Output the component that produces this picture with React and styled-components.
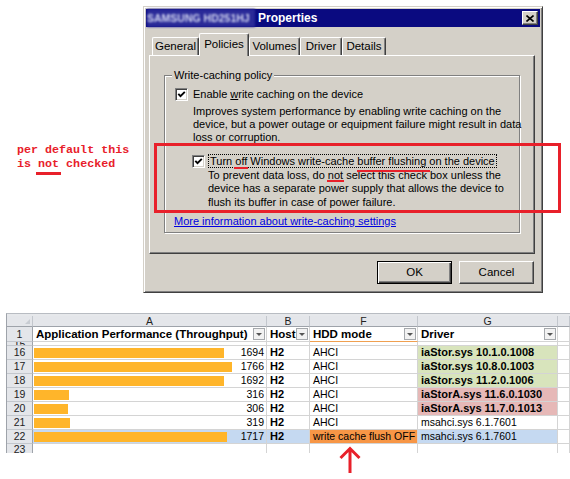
import React from "react";
import styled, { createGlobalStyle } from "styled-components";

const GlobalStyle = createGlobalStyle`
  html, body { margin: 0; padding: 0; background: #fff; }
  body {
    width: 570px;
    height: 479px;
    overflow: hidden;
    font-family: "Liberation Sans", Arial, sans-serif;
  }
`;

const RED = "#e8202a";

const Page = styled.div`
  position: relative;
  width: 570px;
  height: 479px;
`;

const Top = styled.div`
  display: flex;
  padding-top: 6px;
`;

const Note = styled.div`
  width: 143px;
  box-sizing: border-box;
  padding: 137px 0 0 17px;
  font: bold 11.7px/14px "Liberation Mono", "DejaVu Sans Mono", monospace;
  color: ${RED};
  white-space: pre;
`;

const Mark = styled.span`
  position: relative;
  &::after {
    content: "";
    position: absolute;
    left: ${(p) => p.$l || 0}px;
    right: ${(p) => p.$r || 0}px;
    bottom: ${(p) => p.$b}px;
    height: ${(p) => p.$h || 2}px;
    background: ${RED};
  }
`;

const Dialog = styled.div`
  width: 400px;
  height: 287px;
  box-sizing: border-box;
  background: #d4d0c8;
  border: 1px solid;
  border-color: #d4d0c8 #404040 #404040 #d4d0c8;
  box-shadow: inset 1px 1px #fff, inset -1px -1px #808080;
  padding: 2px;
  display: flex;
  flex-direction: column;
  font: 11px/13px "Liberation Sans", Arial, sans-serif;
  color: #000;
`;

const TitleBar = styled.div`
  height: 18px;
  background: #0a0a80;
  display: flex;
  align-items: center;
  padding: 0 2px 0 1px;
`;

const Blurred = styled.span`
  width: 108px;
  font: bold 10.5px/18px "Liberation Sans", Arial, sans-serif;
  color: #d8dcf4;
  background: #2a2a98;
  filter: blur(0.9px);
  white-space: nowrap;
  overflow: hidden;
`;

const TitleText = styled.span`
  flex: 1;
  margin-left: 3px;
  font: bold 12px/18px "Liberation Sans", Arial, sans-serif;
  color: #fff;
`;

const CloseBtn = styled.span`
  width: 16px;
  height: 14px;
  box-sizing: border-box;
  background: #d4d0c8;
  border: 1px solid;
  border-color: #fff #404040 #404040 #fff;
  box-shadow: inset -1px -1px #808080;
  display: flex;
  align-items: center;
  justify-content: center;
`;

const Body = styled.div`
  padding: 6px 5px 0 3px;
  display: flex;
  flex-direction: column;
`;

const TabStrip = styled.div`
  display: flex;
  align-items: flex-end;
  height: 22px;
  padding-left: 3px;
  position: relative;
  z-index: 1;
`;

const Tab = styled.div`
  width: ${(p) => p.$w}px;
  height: ${(p) => (p.$active ? 23 : 18)}px;
  margin-bottom: ${(p) => (p.$active ? -1 : 0)}px;
  box-sizing: border-box;
  background: #d4d0c8;
  border: 1px solid;
  border-bottom: none;
  border-color: #fff #404040 #404040 #fff;
  border-radius: 2px 2px 0 0;
  box-shadow: inset -1px 0 #808080;
  text-align: center;
  line-height: ${(p) => (p.$active ? 20 : 17)}px;
  font-size: 11.5px;
`;

const Panel = styled.div`
  height: 199px;
  box-sizing: border-box;
  border: 1px solid;
  border-color: #fff #404040 #404040 #fff;
  box-shadow: inset -1px -1px #808080;
  padding: 19px 14px 0;
`;

const Group = styled.div`
  position: relative;
  height: 158px;
  box-sizing: border-box;
  border: 1px solid #808080;
  box-shadow: 1px 1px 0 #fff, inset 1px 1px 0 #fff;
  padding: 12px 8px 0 10px;
`;

const Legend = styled.span`
  position: absolute;
  top: -7px;
  left: 7px;
  padding: 0 2px;
  background: #d4d0c8;
  line-height: 13px;
`;

const CheckRow = styled.div`
  display: flex;
  align-items: center;
  gap: ${(p) => p.$gap}px;
  margin-left: ${(p) => p.$indent || 0}px;
  margin-top: ${(p) => p.$top || 0}px;
`;

const Box = styled.span`
  width: 13px;
  height: 13px;
  flex: none;
  box-sizing: border-box;
  background: #fff;
  border: 1px solid;
  border-color: #808080 #fff #fff #808080;
  box-shadow: inset 1px 1px #404040, inset -1px -1px #d4d0c8;
  display: flex;
  align-items: center;
  justify-content: center;
`;

const FocusLabel = styled.span`
  border: 1px dotted #000;
  padding: 0 1px;
  line-height: 12px;
`;

const Desc = styled.div`
  margin-left: ${(p) => p.$indent}px;
  margin-top: ${(p) => p.$top}px;
  line-height: ${(p) => p.$lh}px;
  white-space: nowrap;
`;

const Link = styled.a`
  display: block;
  margin: 5.5px 0 0 -1px;
  color: #0000e0;
  text-decoration: underline;
  line-height: 13px;
`;

const ButtonRow = styled.div`
  display: flex;
  justify-content: flex-end;
  gap: 7px;
  margin: 7px 1px 0 0;
`;

const Button = styled.div`
  width: 75px;
  height: 23px;
  box-sizing: border-box;
  background: #d4d0c8;
  border: 1px solid;
  border-color: ${(p) => (p.$default ? "#000" : "#fff #404040 #404040 #fff")};
  box-shadow: ${(p) =>
    p.$default
      ? "inset 1px 1px #fff, inset -1px -1px #404040, inset -2px -2px #808080"
      : "inset -1px -1px #808080"};
  display: flex;
  align-items: center;
  justify-content: center;
  font-size: 11.5px;
`;

const RedBox = styled.div`
  position: absolute;
  left: 154px;
  top: 143px;
  width: 407px;
  height: 70px;
  box-sizing: border-box;
  border: 3px solid ${RED};
  pointer-events: none;
`;

/* ---------- spreadsheet ---------- */

const Sheet = styled.div`
  margin: 20px 0 0 6px;
  width: 564px;
  border-left: 1px solid #9ea3aa;
  border-top: 1px solid #b8bcc2;
  padding-top: 2px;
  background: #e6e8eb;
  font: 10.5px "Liberation Sans", Arial, sans-serif;
  color: #000;
`;

const Grid = styled.div`
  display: grid;
  grid-template-columns: 26px 234px 43px 108px 140px 12px;
  grid-template-rows: 11px 15px 4px repeat(7, 14px) 9px;
  background: #fff;
`;

const Cell = styled.div`
  box-sizing: border-box;
  border-right: 1px solid #d4d4d4;
  border-bottom: ${(p) => (p.$last ? "none" : "1px solid #d4d4d4")};
  background: ${(p) => p.$bg || "#fff"};
  font-weight: ${(p) => (p.$bold ? "bold" : "normal")};
  font-size: ${(p) => (p.$bold ? 11 : 10.5)}px;
  line-height: 13px;
  padding-left: 3px;
  white-space: nowrap;
  overflow: hidden;
  display: flex;
  align-items: center;
`;

const HeadCell = styled(Cell)`
  background: #e4e6ea;
  border-color: #c3c7cd;
  border-bottom: 1px solid #9ea3aa;
  justify-content: center;
  padding: 0;
  line-height: 10px;
  color: #222;
  font-size: 10.5px;
  position: relative;
`;

const Corner = styled(HeadCell)`
  &::after {
    content: "";
    position: absolute;
    right: 2px;
    bottom: 2px;
    border-style: solid;
    border-width: 0 0 5px 5px;
    border-color: transparent transparent #c8ccd2 transparent;
  }
`;

const RowNum = styled(Cell)`
  background: #e4e6ea;
  border-right: 1px solid #9ea3aa;
  border-bottom: ${(p) => (p.$last ? "none" : "1px solid #c3c7cd")};
  justify-content: center;
  align-items: ${(p) => (p.$clip ? "flex-start" : "center")};
  padding: 0;
  color: #222;
  font-size: 10.5px;
  line-height: ${(p) => (p.$clip ? "11px" : "13px")};
`;

const TitleCell = styled(Cell)`
  justify-content: space-between;
  padding-left: 3px;
  font-size: 11.5px;
  border-bottom: 1px solid ${(p) => p.$line || "#d4d4d4"};
`;

const Filter = styled.span`
  width: 12px;
  height: 12px;
  flex: none;
  margin-right: 1px;
  box-sizing: border-box;
  border: 1px solid #a6a9ad;
  background: #f2f2f2;
  display: flex;
  align-items: center;
  justify-content: center;
  &::after {
    content: "";
    border-style: solid;
    border-width: 3px 3px 0 3px;
    border-color: #555 transparent transparent transparent;
  }
`;

const BarCell = styled(Cell)`
  padding: 0 2px 0 1px;
`;

const Bar = styled.span`
  height: 10px;
  background: #ffb52a;
  flex: none;
`;

const Value = styled.span`
  margin-left: auto;
`;

const Arrow = styled.svg`
  position: absolute;
  left: 338px;
  top: 446px;
`;

const tabs = [
  { label: "General", w: 47 },
  { label: "Policies", w: 50, active: true },
  { label: "Volumes", w: 51 },
  { label: "Driver", w: 42 },
  { label: "Details", w: 44 },
];

const rows = [
  { n: 16, v: 1694, mode: "AHCI", drv: "iaStor.sys 10.1.0.1008", kind: "good" },
  { n: 17, v: 1766, mode: "AHCI", drv: "iaStor.sys 10.8.0.1003", kind: "good" },
  { n: 18, v: 1692, mode: "AHCI", drv: "iaStor.sys 11.2.0.1006", kind: "good" },
  { n: 19, v: 316, mode: "AHCI", drv: "iaStorA.sys 11.6.0.1030", kind: "bad" },
  { n: 20, v: 306, mode: "AHCI", drv: "iaStorA.sys 11.7.0.1013", kind: "bad" },
  { n: 21, v: 319, mode: "AHCI", drv: "msahci.sys 6.1.7601" },
  { n: 22, v: 1717, mode: "write cache flush OFF", drv: "msahci.sys 6.1.7601", sel: true },
];

const MAX = 1766;
const BAR_MAX = 198;
const driverBg = { good: "#d8e4bc", bad: "#e6b8b7" };

function CheckMark() {
  return (
    <svg width="9" height="9" viewBox="0 0 9 9">
      <path d="M1.3 3.8 L3.5 6.2 L7.8 1.8" stroke="#000" strokeWidth="1.9" fill="none" />
    </svg>
  );
}

export default function App() {
  return (
    <Page>
      <GlobalStyle />
      <Top>
        <Note>
          {"per default this\nis "}
          <Mark $b={-4} $l={-2} $r={-2} $h={3}>not</Mark>
          {" checked"}
        </Note>
        <Dialog>
          <TitleBar>
            <Blurred>SAMSUNG HD251HJ</Blurred>
            <TitleText>Properties</TitleText>
            <CloseBtn>
              <svg width="8" height="7" viewBox="0 0 8 7">
                <path d="M0.5 0.5 L7.5 6.5 M7.5 0.5 L0.5 6.5" stroke="#000" strokeWidth="1.6" />
              </svg>
            </CloseBtn>
          </TitleBar>
          <Body>
            <TabStrip>
              {tabs.map((t) => (
                <Tab key={t.label} $w={t.w} $active={t.active}>
                  {t.label}
                </Tab>
              ))}
            </TabStrip>
            <Panel>
              <Group>
                <Legend>Write-caching policy</Legend>
                <CheckRow $gap={5}>
                  <Box>
                    <CheckMark />
                  </Box>
                  <span>
                    Enable <u>w</u>rite caching on the device
                  </span>
                </CheckRow>
                <Desc $indent={18} $top={4} $lh={13}>
                  Improves system performance by enabling write caching on the
                  <br />
                  device, but a power outage or equipment failure might result in data
                  <br />
                  loss or corruption.
                </Desc>
                <CheckRow $gap={3} $indent={17} $top={10}>
                  <Box>
                    <CheckMark />
                  </Box>
                  <FocusLabel>
                    Turn <Mark $b={-2} $l={-1} $r={-1}>off</Mark> Windows write-cache{" "}
                    <Mark $b={-5} $r={-4}>buffer flushing</Mark> on the device
                  </FocusLabel>
                </CheckRow>
                <Desc $indent={33} $top={0.5} $lh={13.5}>
                  To prevent data loss, do <Mark $b={-1} $l={-1} $r={-1}>not</Mark> select this
                  check box unless the
                  <br />
                  device has a separate power supply that allows the device to
                  <br />
                  flush its buffer in case of power failure.
                </Desc>
                <Link>More information about write-caching settings</Link>
              </Group>
            </Panel>
            <ButtonRow>
              <Button $default>OK</Button>
              <Button>Cancel</Button>
            </ButtonRow>
          </Body>
        </Dialog>
      </Top>

      <Sheet>
        <Grid>
          <Corner />
          <HeadCell>A</HeadCell>
          <HeadCell>B</HeadCell>
          <HeadCell>F</HeadCell>
          <HeadCell>G</HeadCell>
          <HeadCell />

          <RowNum>1</RowNum>
          <TitleCell $bold>
            <span>Application Performance (Throughput)</span>
            <Filter />
          </TitleCell>
          <TitleCell $bold>
            <span>Host</span>
            <Filter />
          </TitleCell>
          <TitleCell $bold $line="#f0a050">
            <span>HDD mode</span>
            <Filter />
          </TitleCell>
          <TitleCell $bold>
            <span>Driver</span>
            <Filter />
          </TitleCell>
          <Cell />

          <RowNum style={{ lineHeight: "4px" }}>15</RowNum>
          <Cell />
          <Cell />
          <Cell />
          <Cell />
          <Cell />

          {rows.map((r) => {
            const selBg = r.sel ? "#c5d9f1" : undefined;
            return (
              <React.Fragment key={r.n}>
                <RowNum>{r.n}</RowNum>
                <BarCell $bg={selBg}>
                  <Bar style={{ width: `${Math.round((r.v / MAX) * BAR_MAX)}px` }} />
                  <Value>{r.v}</Value>
                </BarCell>
                <Cell $bg={selBg} $bold>
                  H2
                </Cell>
                <Cell $bg={r.sel ? "#f79646" : undefined}>{r.mode}</Cell>
                <Cell $bg={driverBg[r.kind] || selBg} $bold={!!r.kind}>
                  {r.drv}
                </Cell>
                <Cell />
              </React.Fragment>
            );
          })}

          <RowNum $last $clip>
            23
          </RowNum>
          <Cell $last />
          <Cell $last />
          <Cell $last />
          <Cell $last />
          <Cell $last />
        </Grid>
      </Sheet>

      <RedBox />
      <Arrow width="24" height="28" viewBox="0 0 24 28">
        <path d="M12 3 V27 M2.5 12 L12 2.5 L21.5 12" stroke={RED} strokeWidth="3" fill="none" />
      </Arrow>
    </Page>
  );
}
